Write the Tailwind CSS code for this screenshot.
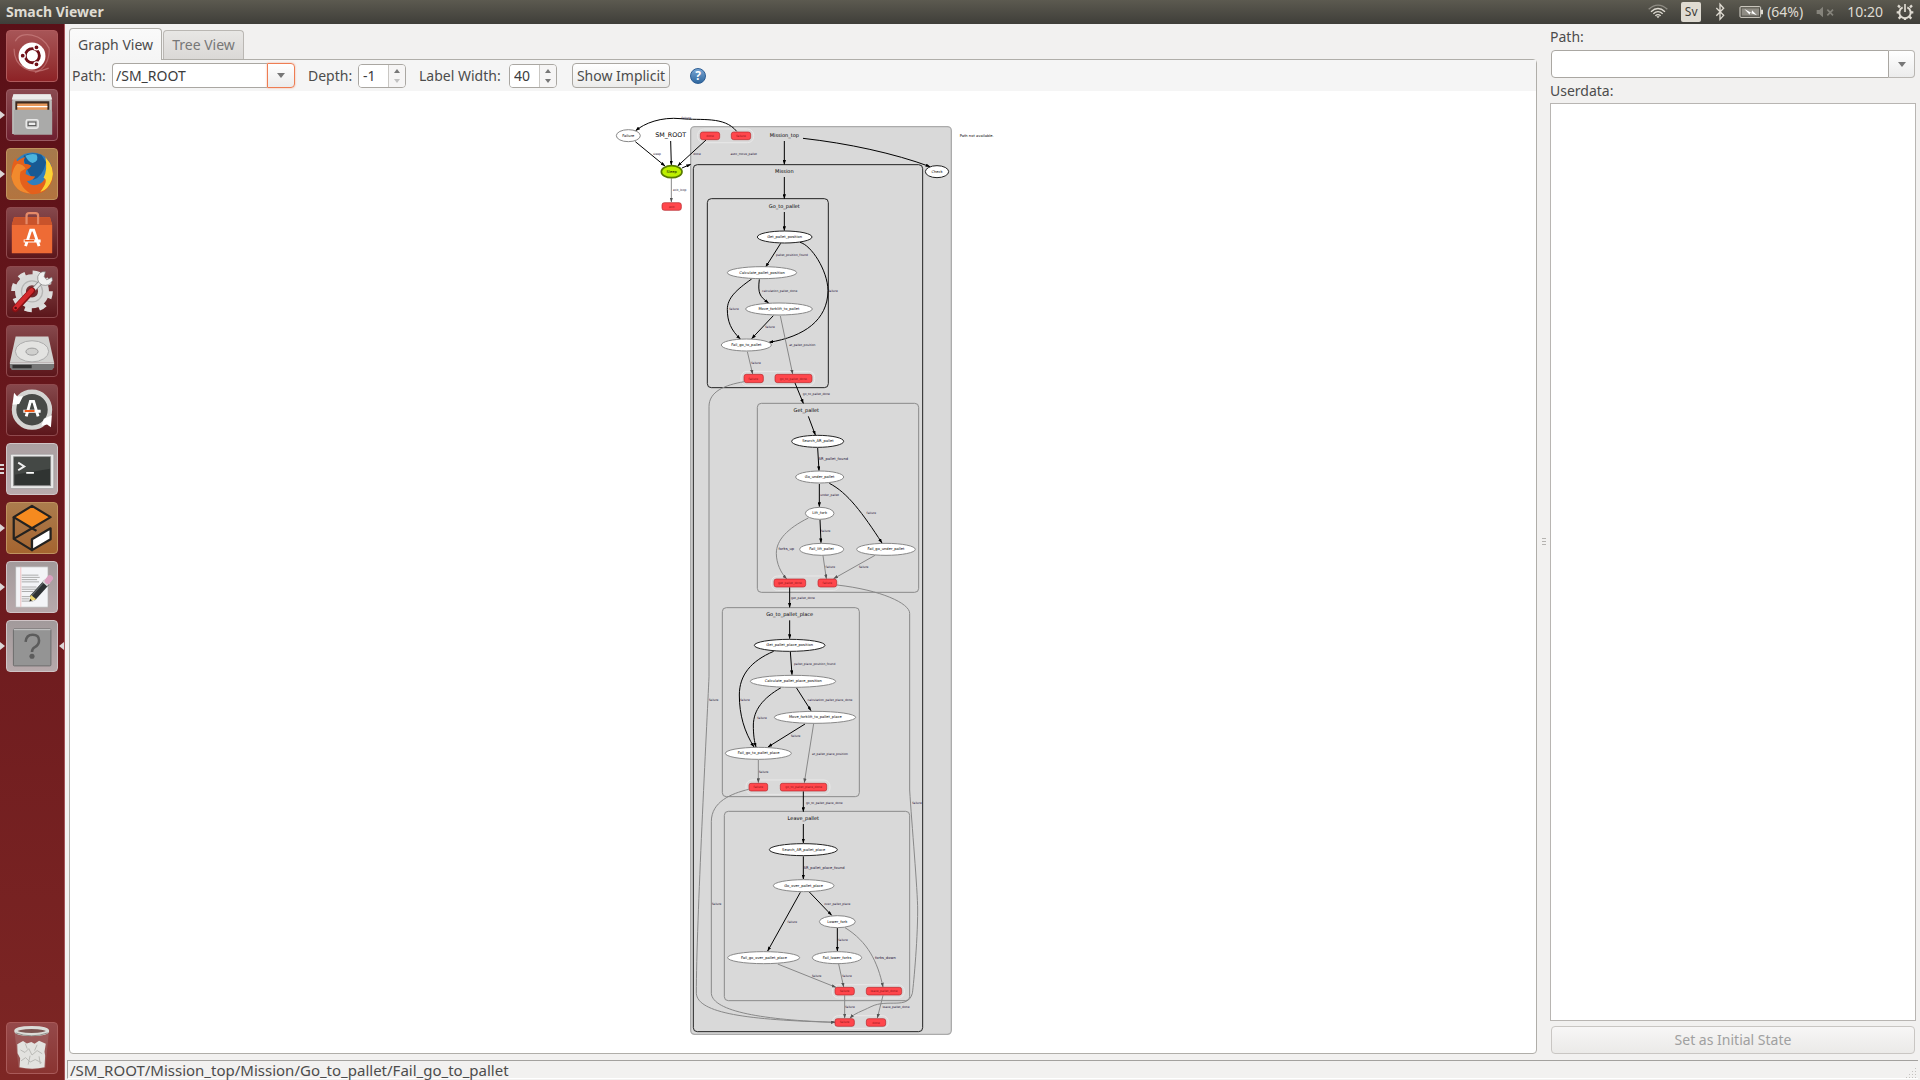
<!DOCTYPE html>
<html lang="en">
<head>
<meta charset="utf-8">
<title>Smach Viewer</title>
<script src="https://cdn.jsdelivr.net/npm/@tailwindcss/browser@4"></script>
</head>
<body class="flex h-screen flex-col overflow-hidden bg-[#f2f1f0] font-['Noto_Sans',sans-serif] text-sm text-[#4c4c4c]">

<!-- Top panel -->
<header class="flex h-6 shrink-0 items-center bg-linear-to-b from-[#5c5a50] to-[#3f3e39] px-1.5 text-[#dfdbd2]">
  <h1 class="grow text-sm font-bold">Smach Viewer</h1>
  <div class="flex items-center gap-[13px]">
    <svg class="h-5 w-5" viewBox="393 8 60 60" fill="none" stroke="#dfdbd2" stroke-width="4"><path d="M395 30Q423 5 451 30" stroke="#8f8c84"/><path d="M402 37Q423 18 444 37M409 43Q423 31 437 43M415 49Q423 43 431 49"/><path d="M418 51L423 57L428 51Z" fill="#dfdbd2" stroke="none"/></svg>
    <span class="flex h-5 w-5 items-center justify-center rounded-xs bg-[#dfdbd2] text-xs text-[#3c3b37]">Sv</span>
    <svg class="h-5 w-3" viewBox="579 6 36 60" fill="none" stroke="#dfdbd2" stroke-width="4"><path d="M586 24L608 46L597 58V13L608 25L586 47"/></svg>
    <div class="flex items-center gap-1">
      <svg class="h-5 w-6" viewBox="650 6 72 60"><rect x="653" y="20" width="62" height="32" rx="3" fill="none" stroke="#dfdbd2" stroke-width="3"/><rect x="658" y="25" width="52" height="22" fill="#8f8c84"/><path d="M716 29h6v14h-6z" fill="#dfdbd2"/><path d="M666 27L688 39L689 31L704 46L683 38L682 44Z" fill="#fff"/></svg>
      <span>(64%)</span>
    </div>
    <svg class="h-5 w-[18px]" viewBox="884 6 54 60"><path d="M886 30h8l11-10v32l-11-10h-8z" fill="#85837b"/><path d="M918 29l17 17M935 29l-17 17" stroke="#85837b" stroke-width="5"/></svg>
    <span>10:20</span>
    <svg class="h-5 w-[18px]" viewBox="1125 6 54 60" fill="none" stroke="#dfdbd2"><path d="M1145 22a17 17 0 1 0 14 0" stroke-width="6"/><path d="M1152 12v24" stroke-width="5"/><path d="M1137 22l-6-6M1167 22l6-6M1134 37h-7M1170 37h7M1139 50l-6 6M1165 50l6 6M1152 54v6" stroke-width="7"/></svg>
  </div>
</header>

<div class="flex min-h-0 grow">
<!-- Launcher -->
<nav aria-label="Launcher" class="flex w-[65px] shrink-0 flex-col gap-[7px] border-r border-[#a5555a] bg-linear-to-b from-[#5a1017] via-[#6c1a1e] to-[#7d2624] pt-1.5 pb-1.5">
  <button aria-label="Dash" class="relative ml-1.5 h-[52px] w-[52px] overflow-hidden rounded-sm border border-[#b05a5c] bg-linear-to-b from-[#a75557] to-[#8d2226]">
    <svg viewBox="18 30 156 156"><g fill="none" stroke="#d08a8b" stroke-width="4"><path d="M44 62C60 25 130 40 150 85" opacity=".6"/><path d="M150 85C150 130 130 150 105 160" opacity=".5"/><path d="M40 85C40 140 90 172 148 146" opacity=".6"/></g><circle cx="96" cy="108" r="42" fill="#fff"/><circle cx="97" cy="107" r="22" fill="none" stroke="#701018" stroke-width="9"/><g fill="#701018" stroke="#fff" stroke-width="4"><circle cx="67" cy="107" r="8"/><circle cx="110" cy="81" r="8"/><circle cx="110" cy="134" r="8"/></g></svg>
  </button>
  <div class="relative flex items-center"><i class="absolute left-0 border-y-4 border-l-5 border-y-transparent border-l-[#dcd6d6]"></i>
  <button aria-label="Files" class="ml-1.5 h-[52px] w-[52px] overflow-hidden rounded-sm border border-[#9a5a62] bg-linear-to-b from-[#8a4a50] to-[#6e1f30]">
    <svg viewBox="18 207 156 156"><path d="M38 220h116l4 22v102H34V242z" fill="#bdbdbb"/><path d="M38 220h116l5 17H33z" fill="#ebebea"/><path d="M44 242h106v30H44z" fill="#3c2a20"/><path d="M50 249h94v24H50z" fill="#e89a5c"/><path d="M50 257h94v4H50z" fill="#fff"/><path d="M39 269h115l5 6v72H39z" fill="#aaaaa9"/><rect x="78" y="300" width="37" height="26" rx="5" fill="#bcbcbb" stroke="#e8e8e8" stroke-width="5"/><rect x="84" y="307" width="24" height="11" fill="#eee" stroke="#555" stroke-width="3"/></svg>
  </button></div>
  <div class="relative flex items-center"><i class="absolute left-0 border-y-4 border-l-5 border-y-transparent border-l-[#dcd6d6]"></i>
  <button aria-label="Firefox" class="ml-1.5 h-[52px] w-[52px] overflow-hidden rounded-sm border border-[#c0935f] bg-linear-to-b from-[#a5794c] to-[#b3743f]">
    <svg viewBox="18 384 156 156"><circle cx="97" cy="459" r="64" fill="#2f7fbe"/><path d="M70 405Q95 392 125 402L140 425Q130 470 100 480Q70 440 70 405" fill="#175a94"/><path d="M75 405Q95 396 110 401Q120 420 98 428Q85 425 75 405" fill="#4bb4dd"/><path d="M138 410Q168 440 160 478Q145 525 97 525Q40 520 32 470Q30 435 44 412Q46 418 50 422Q62 412 76 409Q68 418 72 430Q85 430 94 436Q88 446 78 450L76 462Q88 470 106 470Q98 484 80 484Q96 506 122 492Q150 476 138 410" fill="#e4601c"/><path d="M138 410Q170 445 158 480Q146 512 122 518Q150 480 132 474Q145 450 138 410" fill="#fbd334"/><path d="M32 470Q38 440 50 430Q70 432 76 445L60 455Q50 500 92 523Q40 520 32 470" fill="#f18a2d"/></svg>
  </button></div>
  <button aria-label="Software Center" class="ml-1.5 h-[52px] w-[52px] overflow-hidden rounded-sm border border-[#8f4a4e] bg-linear-to-b from-[#86484c] to-[#5c161b]">
    <svg viewBox="18 561 156 156"><path d="M40 590h112l7 24v88H33v-88z" fill="#ee6b35"/><path d="M40 590h112l7 24H33z" fill="#c9532b"/><path d="M79 612v-27q0-8 8-8h20q8 0 8 8v27" fill="none" stroke="#e58a68" stroke-width="7"/><path d="M76 680L92 630h9l17 50M70 664h53" fill="none" stroke="#fff" stroke-width="9"/><path d="M73 663h30" stroke="#ee5a1b" stroke-width="5"/></svg>
  </button>
  <button aria-label="System Settings" class="ml-1.5 h-[52px] w-[52px] overflow-hidden rounded-sm border border-[#8f4a4e] bg-linear-to-b from-[#86484c] to-[#5c161b]">
    <svg viewBox="18 738 156 156"><circle cx="96" cy="814" r="57" fill="none" stroke="#dededd" stroke-width="16" stroke-dasharray="22 22.8"/><circle cx="96" cy="814" r="36" fill="none" stroke="#d9d9d8" stroke-width="34"/><circle cx="96" cy="814" r="33" fill="none" stroke="#b5b5b4" stroke-width="4"/><path d="M92 818L130 778" stroke="#777" stroke-width="14"/><path d="M92 818L130 778" stroke="#e4e4e4" stroke-width="10"/><path d="M138 753Q120 750 114 768Q112 788 128 794Q150 800 160 780L158 770L142 778L134 768Z" fill="#f0f0ef" stroke="#777" stroke-width="2"/><path d="M44 868L96 812" stroke="#861014" stroke-width="21" stroke-linecap="round"/><path d="M44 866L95 811" stroke="#d32a2d" stroke-width="14" stroke-linecap="round"/><circle cx="45" cy="866" r="4" fill="#5a0c0e"/></svg>
  </button>
  <button aria-label="Disks" class="ml-1.5 h-[52px] w-[52px] overflow-hidden rounded-sm border border-[#8f4a4e] bg-linear-to-b from-[#86484c] to-[#5c161b]">
    <svg viewBox="18 -75 156 156"><path d="M45 -42h102l18 81H27z" fill="#d2d2d0"/><path d="M27 39h138v15l-6 8H33l-6-8z" fill="#777"/><path d="M27 39h138v4H27z" fill="#f5f5f5"/><path d="M35 47h60v10H35z" fill="#333"/><ellipse cx="96" cy="4" rx="52" ry="33" fill="#e3e3e1" stroke="#aaa" stroke-width="3"/><ellipse cx="96" cy="5" rx="19" ry="11" fill="#d0d0ce" stroke="#999" stroke-width="3"/></svg>
  </button>
  <button aria-label="Software Updater" class="ml-1.5 h-[52px] w-[52px] overflow-hidden rounded-sm border border-[#8f4a4e] bg-linear-to-b from-[#86484c] to-[#5c161b]">
    <svg viewBox="18 102 156 156"><circle cx="96" cy="179" r="56" fill="#484a47" stroke="#d4d4d2" stroke-width="14"/><path d="M40 126l10 12 18-1-12 24-21 3zM158 196l-3 38-12-9-18 4 8-22z" fill="#fff"/><path d="M78 200l13-47h10l14 47M69 184h54" fill="none" stroke="#fff" stroke-width="9"/><path d="M73 183h31" stroke="#ee5a1b" stroke-width="6"/></svg>
  </button>
  <div class="relative flex items-center"><i class="absolute left-0 flex w-1 flex-col gap-0.5"><b class="h-0.5 bg-[#dcd6d6]"></b><b class="h-0.5 bg-[#dcd6d6]"></b><b class="h-0.5 bg-[#dcd6d6]"></b></i>
  <button aria-label="Terminal" class="ml-1.5 h-[52px] w-[52px] overflow-hidden rounded-sm border border-[#d0c4c6] bg-linear-to-b from-[#aba0a2] to-[#b9abad]">
    <svg viewBox="18 279 156 156"><rect x="29" y="311" width="135" height="107" rx="4" fill="#e9e9e9" stroke="#999" stroke-width="2"/><rect x="39" y="319" width="115" height="90" fill="#303432" stroke="#888" stroke-width="3"/><path d="M41 321h111v35L41 375z" fill="#444845"/><path d="M53 337l19 12-19 12" fill="none" stroke="#eee" stroke-width="6"/><path d="M78 369h24" stroke="#fff" stroke-width="6"/></svg>
  </button></div>
  <div class="relative flex items-center"><i class="absolute left-0 border-y-4 border-l-5 border-y-transparent border-l-[#dcd6d6]"></i>
  <button aria-label="Blender Box" class="ml-1.5 h-[52px] w-[52px] overflow-hidden rounded-sm border border-[#c0935f] bg-linear-to-b from-[#ab7c4d] to-[#a5642f]">
    <svg viewBox="18 456 156 156" fill="none" stroke="#242220" stroke-width="7" stroke-linejoin="round"><path d="M96 465l58 35-58 35-57-35z" fill="#f58a1f"/><path d="M39 500v68l57 35v-34M39 568l57-33 14 8"/><path d="M96 569l58-34v34l-58 34z" fill="#fff"/></svg>
  </button></div>
  <div class="relative flex items-center"><i class="absolute left-0 border-y-4 border-l-5 border-y-transparent border-l-[#dcd6d6]"></i>
  <button aria-label="Text Editor" class="ml-1.5 h-[52px] w-[52px] overflow-hidden rounded-sm border border-[#d0c4c6] bg-linear-to-b from-[#a29a9b] to-[#b7a9ab]">
    <svg viewBox="18 633 156 156"><path d="M45 648h101v126H45z" fill="#f3f4f7" stroke="#aaa" stroke-width="2"/><path d="M61 649v124" stroke="#f1a6a6" stroke-width="2"/><path d="M64 674h52M64 681h56M64 688h48M64 695h54M64 711h46M64 718h44M64 725h36M64 741h30M64 748h24M64 755h36" stroke="#a9a9a9" stroke-width="3"/><path d="M97 746l45-50" stroke="#2e3234" stroke-width="21"/><path d="M92 741l45-50" stroke="#62686a" stroke-width="4"/><path d="M89 755l3-20 18 15z" fill="#ead36b"/><path d="M135 702l9-10" stroke="#d8d8d8" stroke-width="21"/><path d="M145 692l7-8" stroke="#dba0c0" stroke-width="19" stroke-linecap="round"/><path d="M88 756l2-8 6 5z" fill="#222"/></svg>
  </button></div>
  <div class="relative flex items-center"><i class="absolute left-0 border-y-4 border-l-5 border-y-transparent border-l-[#dcd6d6]"></i><i class="absolute right-0 border-y-4 border-r-5 border-y-transparent border-r-[#dcd6d6]"></i>
  <button aria-label="Smach Viewer" class="ml-1.5 h-[52px] w-[52px] overflow-hidden rounded-sm border border-[#d0c4c6] bg-linear-to-b from-[#a29a9b] to-[#b7a9ab]">
    <svg viewBox="18 810 156 156"><rect x="38" y="835" width="117" height="115" rx="3" fill="#949494" stroke="#6b6b6b" stroke-width="3"/><path d="M39 837h115" stroke="#ccc" stroke-width="3"/><path d="M76 875q2-22 22-22t20 18q0 14-14 21-8 5-8 15" fill="none" stroke="#5c5c5c" stroke-width="8"/><circle cx="96" cy="920" r="8" fill="#5c5c5c"/></svg>
  </button></div>
  <button aria-label="Trash" class="mt-auto ml-1.5 h-[52px] w-[52px] shrink-0 overflow-hidden rounded-sm border border-[#a95a59] bg-linear-to-b from-[#95494a] to-[#8a3431]">
    <svg viewBox="18 66 156 156"><path d="M42 98l12 108q42 10 84 0l10-108z" fill="#b09090" opacity=".3"/><path d="M50 132l18-10 12 8 14-5 10 6 14-10 21 10-4 25 2 12-2 36q-38 9-78 0l2-28-8-16z" fill="#e2e2df"/><path d="M60 150l14 8 12-12 10 20 16-14 16 10M62 184l14-10 14 14 16-8 20 10M75 130l6 16M112 134l-8 18M90 168l-6 28M118 170l4 24" fill="none" stroke="#b7b7b3" stroke-width="3"/><ellipse cx="95" cy="91" rx="50" ry="11" fill="#7c5552" stroke="#dbdcd8" stroke-width="9"/><path d="M45 97q50 18 100 0" fill="none" stroke="#8c8e88" stroke-width="3"/></svg>
  </button>
</nav>

<!-- Window -->
<div class="flex min-w-0 grow flex-col">
  <main class="flex min-h-0 grow px-1 pt-1">
    <section class="flex min-w-0 grow flex-col pb-1.5">
      <div role="tablist" class="flex h-[31px] shrink-0 items-end">
        <button role="tab" aria-selected="true" class="relative -mb-px h-8 w-[93px] rounded-t-sm border border-b-0 border-[#b0aea9] bg-linear-to-b from-[#fafafa] to-[#f5f5f5]">Graph View</button>
        <button role="tab" aria-selected="false" class="ml-px h-[29px] w-[81px] rounded-t-sm border border-b-0 border-[#bab7b3] bg-linear-to-b from-[#e8e7e5] to-[#dad8d6] text-[#777]">Tree View</button>
      </div>
      <div class="flex min-h-0 grow flex-col rounded-b-sm rounded-tr-sm border border-[#b0aea9] bg-white">
        <div class="flex h-[31px] shrink-0 items-center bg-[#f5f5f5] pl-0.5">
          <label for="path" class="w-10">Path:</label>
          <div class="flex h-[25px] w-[183px]">
            <input id="path" value="/SM_ROOT" class="min-w-0 grow rounded-l-sm border border-r-0 border-[#aaa7a2] bg-white px-[3px] text-[#3c3c3c] outline-none">
            <button aria-label="Choose path" class="flex w-7 shrink-0 items-center justify-center rounded-r-sm border border-[#ee7d53] bg-linear-to-b from-white to-[#ececec] shadow-[0_0_2px_#f2a98c]"><i class="border-x-4 border-t-5 border-x-transparent border-t-[#777]"></i></button>
          </div>
          <label for="depth" class="ml-[13px] w-[50px]">Depth:</label>
          <div class="flex h-6 w-12 overflow-hidden rounded-sm border border-[#aaa7a2]">
            <input id="depth" value="-1" class="w-[30px] shrink-0 border-r border-[#c9c7c3] bg-white px-1 text-[#3c3c3c] outline-none">
            <div class="flex grow flex-col items-center justify-center gap-1.5 bg-[#f6f5f5]"><button aria-label="Increase depth" class="border-x-3 border-b-4 border-x-transparent border-b-[#777]"></button><button aria-label="Decrease depth" class="border-x-3 border-t-4 border-x-transparent border-t-[#c0c0c0]"></button></div>
          </div>
          <label for="lw" class="ml-[13px] w-[90px] whitespace-nowrap">Label Width:</label>
          <div class="flex h-6 w-12 overflow-hidden rounded-sm border border-[#aaa7a2]">
            <input id="lw" value="40" class="w-[30px] shrink-0 border-r border-[#c9c7c3] bg-white px-1 text-[#3c3c3c] outline-none">
            <div class="flex grow flex-col items-center justify-center gap-1.5 bg-[#f6f5f5]"><button aria-label="Increase label width" class="border-x-3 border-b-4 border-x-transparent border-b-[#777]"></button><button aria-label="Decrease label width" class="border-x-3 border-t-4 border-x-transparent border-t-[#777]"></button></div>
          </div>
          <button class="ml-[15px] h-[25px] w-[98px] rounded-sm border border-[#aaa7a2] bg-linear-to-b from-white to-[#ececeb] whitespace-nowrap">Show Implicit</button>
          <button aria-label="Help" class="ml-5 flex h-4 w-4 items-center justify-center rounded-full border border-[#2c5d94] bg-linear-to-b from-[#7aa6d3] to-[#2f689f] text-xs font-bold text-white">?</button>
        </div>

        <!-- State machine graph -->
        <div class="flex min-h-0 grow justify-center overflow-hidden pt-[9px]">
        <svg class="h-[940px] w-[405px] shrink-0 font-['DejaVu_Sans',sans-serif] text-[11px]" viewBox="0 0 1215 2820" text-anchor="middle" fill="#000">
          <defs>
            <marker id="a" markerUnits="userSpaceOnUse" markerWidth="14" markerHeight="10" refX="13" refY="5" orient="auto"><path d="M0 0L14 5L0 10Z" fill="#000"/></marker>
            <marker id="g" markerUnits="userSpaceOnUse" markerWidth="14" markerHeight="10" refX="13" refY="5" orient="auto"><path d="M0 0L14 5L0 10Z" fill="#555"/></marker>
          </defs>

          <!-- Containers -->
          <rect x="269" y="80" width="782" height="2723" rx="12" fill="#d9d9d9" stroke="#ababab" stroke-width="4"/>
          <rect x="277" y="194" width="688" height="2601" rx="12" fill="none" stroke="#222" stroke-width="3"/>
          <rect x="319" y="296" width="363" height="567" rx="12" fill="none" stroke="#222" stroke-width="3"/>
          <g fill="none" stroke="#8a8a8a" stroke-width="3">
            <rect x="469" y="910" width="484" height="567" rx="12"/>
            <rect x="364" y="1523" width="411" height="567" rx="12"/>
            <rect x="370" y="2134" width="556" height="568" rx="12"/>
          </g>
          <g fill="none" stroke="#e8e8e8" stroke-width="3">
            <rect x="290" y="87" width="168" height="41" rx="18"/>
            <rect x="420" y="814" width="221" height="43" rx="18"/>
            <rect x="511" y="1428" width="204" height="43" rx="18"/>
            <rect x="435" y="2040" width="252" height="43" rx="18"/>
            <rect x="694" y="2654" width="216" height="40" rx="18"/>
            <rect x="694" y="2747" width="168" height="38" rx="18"/>
          </g>

          <!-- Container titles -->
          <g class="text-[19px]"><text x="209" y="110">SM_ROOT</text></g>
          <g class="text-[15px]">
            <text x="550" y="111">Mission_top</text>
            <text x="550" y="219">Mission</text>
            <text x="550" y="324">Go_to_pallet</text>
            <text x="616" y="936">Get_pallet</text>
            <text x="566" y="1548">Go_to_pallet_place</text>
            <text x="607" y="2160">Leave_pallet</text>
          </g>
          <text x="1127" y="111">Path not available.</text>

          <!-- Top level -->
          <g fill="none" stroke="#000" stroke-width="3">
            <path d="M407 94C370 48 300 62 240 56C180 50 130 70 104 92" marker-end="url(#a)"/>
            <path d="M103 125L192 198" marker-end="url(#a)"/>
            <path d="M209 123L211 195" marker-end="url(#a)"/>
            <path d="M315 120L230 198" marker-end="url(#a)"/>
            <path d="M243 204L269 193" marker-end="url(#a)"/>
            <path d="M550 123V193" marker-end="url(#a)"/>
            <path d="M606 115C740 130 880 160 987 200" marker-end="url(#a)"/>
            <path d="M550 231V296" marker-end="url(#a)"/>
            <path d="M550 336V392" marker-end="url(#a)"/>
          </g>
          <path d="M211 235V306" fill="none" stroke="#888" stroke-width="3" marker-end="url(#g)"/>
          <g fill="#fff" stroke="#222" stroke-width="3">
            <ellipse cx="82" cy="107" rx="36" ry="18" stroke="#888"/>
            <ellipse cx="212" cy="215" rx="31" ry="18" fill="#bdf000" stroke="#587a00" stroke-width="5"/>
            <ellipse cx="1008" cy="215" rx="35" ry="18"/>
          </g>
          <text x="82" y="111">Failure</text><text x="212" y="219">Sleep</text><text x="1008" y="219">Check</text>
          <g fill="#ff474c" stroke="#b3262b" stroke-width="2">
            <rect x="298" y="96" width="58" height="23" rx="7"/><rect x="391" y="96" width="58" height="23" rx="7"/><rect x="183" y="308" width="58" height="23" rx="7"/>
          </g>
          <g class="text-[9px]" fill="#8f1216"><text x="327" y="111">done</text><text x="420" y="111">failure</text><text x="212" y="323">exit</text></g>
          <g class="text-[9px]" fill="#1c1034"><text x="256" y="57">failure</text><text x="168" y="164">sleep</text><text x="288" y="164">done</text><text x="428" y="164">auto_move_pallet</text><text x="236" y="273">exit_loop</text></g>

          <!-- Go_to_pallet -->
          <g transform="translate(240 270)">
            <g fill="none" stroke="#000" stroke-width="3">
              <path d="M299 160L254 231" marker-end="url(#a)"/>
              <path d="M357 157C390 165 440 240 441 302C440 390 370 440 264 457" marker-end="url(#a)"/>
              <path d="M212 267C165 300 139 325 139 358C139 395 150 420 178 447" marker-end="url(#a)"/>
              <path d="M235 268C230 310 236 320 263 339" marker-end="url(#a)"/>
              <path d="M277 377L212 446" marker-end="url(#a)"/>
              <path d="M342 579L367 640" marker-end="url(#a)"/>
            </g>
            <g fill="none" stroke="#888" stroke-width="3">
              <path d="M298 378L335 552" marker-end="url(#g)"/><path d="M199 485L215 552" marker-end="url(#g)"/>
            </g>
            <g fill="#fff" stroke="#888" stroke-width="3">
              <ellipse cx="311" cy="141" rx="82" ry="18" stroke="#222"/><ellipse cx="243" cy="248" rx="104" ry="18"/><ellipse cx="294" cy="357" rx="100" ry="18"/><ellipse cx="196" cy="465" rx="75" ry="18"/>
            </g>
            <text x="311" y="144">Get_pallet_position</text><text x="243" y="251">Calculate_pallet_position</text><text x="294" y="359">Move_forklift_to_pallet</text><text x="196" y="467">Fail_go_to_pallet</text>
            <g fill="#ff474c" stroke="#b3262b" stroke-width="2"><rect x="189" y="553" width="58" height="25" rx="7"/><rect x="282" y="553" width="111" height="25" rx="7"/></g>
            <g class="text-[9px]" fill="#8f1216"><text x="217" y="569">failure</text><text x="337" y="569">go_to_pallet_done</text></g>
            <g class="text-[9px]" fill="#1c1034"><text x="333" y="198">pallet_position_found</text><text x="296" y="305">calculation_pallet_done</text><text x="456" y="305">failure</text><text x="159" y="359">failure</text><text x="267" y="413">failure</text><text x="364" y="467">at_pallet_position</text><text x="225" y="521">failure</text><text x="406" y="614">go_to_pallet_done</text></g>
          </g>

          <!-- Get_pallet -->
          <g transform="translate(240 870)">
            <g fill="none" stroke="#000" stroke-width="3">
              <path d="M382 79L403 135" marker-end="url(#a)"/><path d="M410 174L414 242" marker-end="url(#a)"/><path d="M415 282V350" marker-end="url(#a)"/><path d="M417 389L420 458" marker-end="url(#a)"/>
              <path d="M445 280C500 308 545 370 603 459" marker-end="url(#a)"/><path d="M326 592V652" marker-end="url(#a)"/>
            </g>
            <g fill="none" stroke="#888" stroke-width="3">
              <path d="M382 384C320 415 286 450 286 490C286 520 300 550 317 566" marker-end="url(#g)"/><path d="M426 497L436 566" marker-end="url(#g)"/><path d="M582 496L458 566" marker-end="url(#g)"/>
              <path d="M190 -25C130 -15 84 5 84 50V860C78 1000 46 1600 46 1810C50 1870 200 1890 463 1897" marker-end="url(#g)"/>
              <path d="M468 585C600 600 686 640 686 670V1200C692 1300 710 1500 710 1560C710 1660 696 1800 694 1810C680 1860 620 1825 570 1850C540 1865 520 1870 507 1885" marker-end="url(#g)"/>
            </g>
            <g fill="#fff" stroke="#888" stroke-width="3">
              <ellipse cx="410" cy="154" rx="78" ry="18" stroke="#222"/><ellipse cx="416" cy="261" rx="72" ry="18"/><ellipse cx="416" cy="370" rx="43" ry="18"/><ellipse cx="422" cy="478" rx="66" ry="18"/><ellipse cx="615" cy="478" rx="88" ry="18"/>
            </g>
            <text x="411" y="156">Search_AR_pallet</text><text x="416" y="264">Go_under_pallet</text><text x="416" y="372">Lift_fork</text><text x="422" y="480">Fail_lift_pallet</text><text x="615" y="480">Fail_go_under_pallet</text>
            <g fill="#ff474c" stroke="#b3262b" stroke-width="2"><rect x="279" y="567" width="95" height="24" rx="7"/><rect x="411" y="567" width="56" height="24" rx="7"/></g>
            <g class="text-[9px]" fill="#8f1216"><text x="327" y="582">get_pallet_done</text><text x="439" y="582">failure</text></g>
            <g class="text-[9px]" fill="#1c1034"><text class="text-[11px]" x="457" y="209">AR_pallet_found</text><text x="446" y="318">under_pallet</text><text x="571" y="372">failure</text><text x="434" y="426">failure</text><text class="text-[11px]" x="316" y="480">forks_up</text><text x="448" y="534">failure</text><text x="548" y="534">failure</text><text x="366" y="627">get_pallet_done</text></g>
          </g>

          <!-- Go_to_pallet_place -->
          <g transform="translate(240 1485)">
            <g fill="none" stroke="#000" stroke-width="3">
              <path d="M326 76V131" marker-end="url(#a)"/><path d="M328 170L333 239" marker-end="url(#a)"/><path d="M346 278L390 347" marker-end="url(#a)"/><path d="M372 387L261 456" marker-end="url(#a)"/>
              <path d="M278 169C210 198 175 240 175 300C175 360 190 410 219 456" marker-end="url(#a)"/><path d="M300 278C245 310 218 345 217 390C217 420 220 440 225 456" marker-end="url(#a)"/><path d="M367 589V650" marker-end="url(#a)"/>
            </g>
            <g fill="none" stroke="#888" stroke-width="3">
              <path d="M398 386L370 563" marker-end="url(#g)"/><path d="M232 495V563" marker-end="url(#g)"/>
              <path d="M203 583C150 596 91 620 91 680V1195C95 1250 250 1275 463 1282" marker-end="url(#g)"/>
            </g>
            <g fill="#fff" stroke="#888" stroke-width="3">
              <ellipse cx="326" cy="151" rx="106" ry="18" stroke="#222"/><ellipse cx="336" cy="259" rx="128" ry="18"/><ellipse cx="402" cy="367" rx="122" ry="18"/><ellipse cx="232" cy="475" rx="99" ry="18"/>
            </g>
            <text x="326" y="153">Get_pallet_place_position</text><text x="337" y="261">Calculate_pallet_place_position</text><text x="403" y="369">Move_forklift_to_pallet_place</text><text x="233" y="477">Fail_go_to_pallet_place</text>
            <g fill="#ff474c" stroke="#b3262b" stroke-width="2"><rect x="204" y="565" width="56" height="23" rx="6"/><rect x="298" y="565" width="139" height="23" rx="6"/></g>
            <g class="text-[9px]" fill="#8f1216"><text x="232" y="580">failure</text><text x="368" y="580">go_to_pallet_place_done</text></g>
            <g class="text-[9px]" fill="#1c1034"><text x="401" y="209">pallet_place_position_found</text><text x="447" y="318">calculation_pallet_place_done</text><text x="192" y="318">failure</text><text x="243" y="372">failure</text><text x="344" y="426">failure</text><text x="447" y="480">at_pallet_place_position</text><text x="248" y="534">failure</text><text x="98" y="318">failure</text><text x="430" y="627">go_to_pallet_place_done</text><text x="708" y="627">failure</text></g>
          </g>

          <!-- Leave_pallet -->
          <g transform="translate(240 2085)">
            <g fill="none" stroke="#000" stroke-width="3">
              <path d="M367 87V144" marker-end="url(#a)"/><path d="M367 184V252" marker-end="url(#a)"/><path d="M358 292L260 468" marker-end="url(#a)"/><path d="M385 291L452 361" marker-end="url(#a)"/><path d="M469 399V468" marker-end="url(#a)"/>
            </g>
            <g fill="none" stroke="#888" stroke-width="3">
              <path d="M290 507L465 577" marker-end="url(#g)"/><path d="M473 507L488 576" marker-end="url(#g)"/><path d="M492 398C560 440 590 500 606 576" marker-end="url(#g)"/><path d="M491 601V669" marker-end="url(#g)"/><path d="M606 601L589 669" marker-end="url(#g)"/>
            </g>
            <g fill="#fff" stroke="#888" stroke-width="3">
              <ellipse cx="367" cy="164" rx="102" ry="18" stroke="#222"/><ellipse cx="368" cy="272" rx="91" ry="18"/><ellipse cx="469" cy="380" rx="54" ry="18"/><ellipse cx="248" cy="488" rx="108" ry="18"/><ellipse cx="468" cy="488" rx="74" ry="18"/>
            </g>
            <text x="368" y="167">Search_AR_pallet_place</text><text x="368" y="275">Go_over_pallet_place</text><text x="469" y="383">Lower_fork</text><text x="249" y="491">Fail_go_over_pallet_place</text><text x="468" y="491">Fail_lower_forks</text>
            <g fill="#ff474c" stroke="#b3262b" stroke-width="2"><rect x="462" y="577" width="58" height="23" rx="7"/><rect x="556" y="577" width="106" height="23" rx="7"/><rect x="462" y="671" width="58" height="23" rx="7"/><rect x="556" y="671" width="58" height="23" rx="7"/></g>
            <g class="text-[9px]" fill="#8f1216"><text x="491" y="592">failure</text><text x="609" y="592">leave_pallet_done</text><text x="491" y="685">failure</text><text x="585" y="687">done</text></g>
            <g class="text-[9px]" fill="#1c1034"><text class="text-[11px]" x="429" y="221">AR_pallet_place_found</text><text x="469" y="330">over_pallet_place</text><text x="334" y="384">failure</text><text x="486" y="438">failure</text><text x="107" y="330">failure</text><text class="text-[11px]" x="613" y="491">forks_down</text><text x="407" y="546">failure</text><text x="498" y="546">failure</text><text x="507" y="639">failure</text><text x="645" y="639">leave_pallet_done</text></g>
          </g>
        </svg>
        </div>
      </div>
    </section>

    <div role="separator" aria-orientation="vertical" class="flex w-[13px] shrink-0 flex-col items-center justify-center gap-0.5 pb-1.5"><i class="h-px w-1 bg-[#b5b3b0]"></i><i class="h-px w-1 bg-[#b5b3b0]"></i><i class="h-px w-1 bg-[#b5b3b0]"></i></div>

    <aside class="flex w-[366px] shrink-0 flex-col pb-1.5">
      <label for="upath" class="h-[22px] leading-[18px]">Path:</label>
      <div class="mx-px flex h-7 shrink-0">
        <input id="upath" class="min-w-0 grow rounded-l-sm border border-[#aaa7a2] bg-white px-1 outline-none">
        <button aria-label="Choose userdata path" class="flex w-[26px] shrink-0 items-center justify-center rounded-r-sm border border-l-0 border-[#b9b6b2] bg-linear-to-b from-white to-[#ececec]"><i class="border-x-4 border-t-5 border-x-transparent border-t-[#777]"></i></button>
      </div>
      <label for="userdata" class="h-[25px] shrink-0 leading-[26px]">Userdata:</label>
      <textarea id="userdata" class="min-h-0 grow resize-none border border-[#b8b5b2] bg-white outline-none"></textarea>
      <button disabled class="mx-px mt-[5px] h-7 shrink-0 rounded-sm border border-[#c9c6c3] bg-linear-to-b from-[#f7f6f6] to-[#ebeae8] text-[#a0a0a0]">Set as Initial State</button>
    </aside>
  </main>
  <footer class="mr-0.5 mb-px ml-0.5 flex h-[19px] shrink-0 items-center border-t border-b border-l border-[#a3a19e] border-b-white pl-0.5">
    <span class="grow text-[15px] leading-4">/SM_ROOT/Mission_top/Mission/Go_to_pallet/Fail_go_to_pallet</span>
    <svg class="h-3 w-3 self-end" viewBox="0 0 12 12" stroke="#c4c2bf" stroke-width="1"><path d="M9 2.5h1M6 5.5h1M9 5.5h1M3 8.500h1M6 8.500h1M9 8.500h1M0 11.500h1M3 11.500h1M6 11.500h1M9 11.500h1"/></svg>
  </footer>
</div>
</div>
</body>
</html>
